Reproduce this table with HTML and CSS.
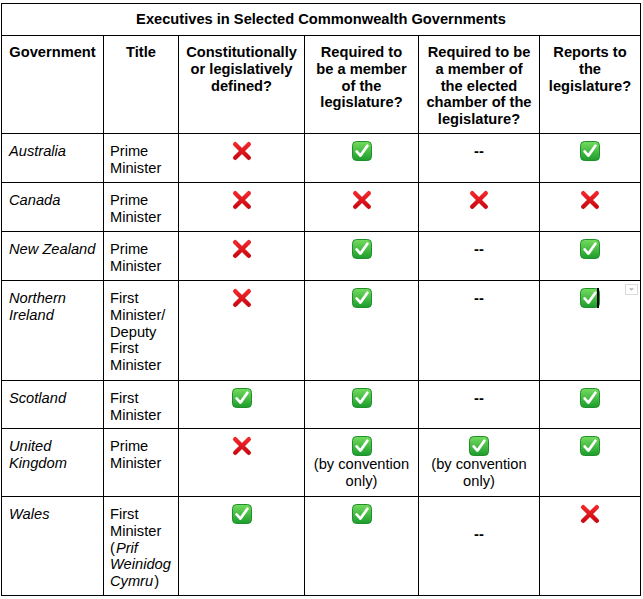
FILE: index.html
```html
<!DOCTYPE html>
<html>
<head>
<meta charset="utf-8">
<link rel="stylesheet" href="styles.css">
</head>
<body>
<svg class="defs" width="0" height="0" aria-hidden="true">
  <defs>
    <linearGradient id="gg" x1="0" y1="0" x2="0" y2="1">
      <stop offset="0" stop-color="#74dc5e"/>
      <stop offset="1" stop-color="#1c9c2c"/>
    </linearGradient>
    <linearGradient id="rg" x1="0" y1="0" x2="0" y2="1">
      <stop offset="0" stop-color="#f0262a"/>
      <stop offset="1" stop-color="#cc0a12"/>
    </linearGradient>
    <symbol id="chk" viewBox="0 0 20 20">
      <rect x="0.5" y="0.5" width="19" height="19" rx="4" fill="url(#gg)" stroke="#1f8f2b" stroke-width="1"/>
      <path d="M4.6 10.4 L8.4 14.6 L15.4 4.8" fill="none" stroke="#fff" stroke-width="2.7" stroke-linecap="round" stroke-linejoin="round"/>
    </symbol>
    <symbol id="crs" viewBox="0 0 20 20">
      <path d="M3.2 3.2 L16.8 16.8 M16.8 3.2 L3.2 16.8" fill="none" stroke="url(#rg)" stroke-width="4.4" stroke-linecap="round"/>
    </symbol>
  </defs>
</svg>
<table class="exec">
  <colgroup>
    <col class="w1"><col class="w2"><col class="w3"><col class="w4"><col class="w5"><col class="w6">
  </colgroup>
  <tr class="r-title"><th colspan="6">Executives in Selected Commonwealth Governments</th></tr>
  <tr class="r-head">
    <th>Government</th>
    <th>Title</th>
    <th>Constitutionally or legislatively defined?</th>
    <th>Required to be a member of the legislature?</th>
    <th>Required to be a member of the elected chamber of the legislature?</th>
    <th>Reports to the legislature?</th>
  </tr>
  <tr class="r-49">
    <td class="gov">Australia</td>
    <td class="ttl">Prime Minister</td>
    <td class="mk"><svg class="ic"><use href="#crs"/></svg></td>
    <td class="mk"><svg class="ic"><use href="#chk"/></svg></td>
    <td class="mk"><span class="dash">--</span></td>
    <td class="mk"><svg class="ic"><use href="#chk"/></svg></td>
  </tr>
  <tr class="r-49">
    <td class="gov">Canada</td>
    <td class="ttl">Prime Minister</td>
    <td class="mk"><svg class="ic"><use href="#crs"/></svg></td>
    <td class="mk"><svg class="ic"><use href="#crs"/></svg></td>
    <td class="mk"><svg class="ic"><use href="#crs"/></svg></td>
    <td class="mk"><svg class="ic"><use href="#crs"/></svg></td>
  </tr>
  <tr class="r-49">
    <td class="gov">New Zealand</td>
    <td class="ttl">Prime Minister</td>
    <td class="mk"><svg class="ic"><use href="#crs"/></svg></td>
    <td class="mk"><svg class="ic"><use href="#chk"/></svg></td>
    <td class="mk"><span class="dash">--</span></td>
    <td class="mk"><svg class="ic"><use href="#chk"/></svg></td>
  </tr>
  <tr class="r-100">
    <td class="gov">Northern Ireland</td>
    <td class="ttl">First Minister/ Deputy First Minister</td>
    <td class="mk"><svg class="ic"><use href="#crs"/></svg></td>
    <td class="mk"><svg class="ic"><use href="#chk"/></svg></td>
    <td class="mk"><span class="dash">--</span></td>
    <td class="mk sel">
      <span class="icwrap"><svg class="ic"><use href="#chk"/></svg><span class="cursor"></span></span>
      <span class="dropdown"><svg viewBox="0 0 13 11" width="13" height="11"><path d="M3.5 4 L9.5 4 L6.5 7 Z" fill="#b5b5b5"/></svg></span>
    </td>
  </tr>
  <tr class="r-48">
    <td class="gov">Scotland</td>
    <td class="ttl">First Minister</td>
    <td class="mk"><svg class="ic"><use href="#chk"/></svg></td>
    <td class="mk"><svg class="ic"><use href="#chk"/></svg></td>
    <td class="mk"><span class="dash">--</span></td>
    <td class="mk"><svg class="ic"><use href="#chk"/></svg></td>
  </tr>
  <tr class="r-68">
    <td class="gov">United Kingdom</td>
    <td class="ttl">Prime Minister</td>
    <td class="mk"><svg class="ic"><use href="#crs"/></svg></td>
    <td class="mk"><svg class="ic"><use href="#chk"/></svg><span class="note">(by convention only)</span></td>
    <td class="mk"><svg class="ic"><use href="#chk"/></svg><span class="note">(by convention only)</span></td>
    <td class="mk"><svg class="ic"><use href="#chk"/></svg></td>
  </tr>
  <tr class="r-99">
    <td class="gov">Wales</td>
    <td class="ttl"><span class="ln">First</span> <span class="ln">Minister</span> <span class="ln">(<i class="cy">Prif</i></span> <span class="ln"><i>Weinidog</i></span> <span class="ln"><i class="cy2">Cymru</i>)</span></td>
    <td class="mk"><svg class="ic"><use href="#chk"/></svg></td>
    <td class="mk"><svg class="ic"><use href="#chk"/></svg></td>
    <td class="mk"><span class="dash low">--</span></td>
    <td class="mk"><svg class="ic"><use href="#crs"/></svg></td>
  </tr>
</table>
</body>
</html>
```

FILE: styles.css
```css
html, body {
  margin: 0;
  padding: 0;
  background: #fff;
}
body {
  font-family: "Liberation Sans", Arial, sans-serif;
  font-size: 14.67px;
  line-height: 16.8px;
  color: #000;
}
.defs {
  position: absolute;
  width: 0;
  height: 0;
  overflow: hidden;
}
.exec {
  border-collapse: collapse;
  table-layout: fixed;
  width: 639px;
  margin: 3px 0 0 1px;
}
.w1 { width: 102px; }
.w2 { width: 75px; }
.w3 { width: 126px; }
.w4 { width: 114px; }
.w5 { width: 121px; }
.w6 { width: 101px; }

.exec th,
.exec td {
  border: 1px solid #000;
  padding: 9px 6px 0 6px;
  vertical-align: top;
}
.exec th {
  font-weight: bold;
  text-align: center;
  padding-top: 8px;
}
.r-title { height: 32px; }
.r-title th {
  padding: 0 6px;
  vertical-align: middle;
}
.r-head { height: 98px; }
.r-49 { height: 49px; }
.r-48 { height: 48px; }
.r-68 { height: 68px; }
.r-99 { height: 99px; }
.r-100 { height: 100px; }

.gov {
  font-style: italic;
  text-align: left;
  padding-left: 7px !important;
}
.ttl {
  text-align: left;
}
.ln {
  white-space: nowrap;
}
.cy {
  padding-left: 1px;
}
.cy2 {
  padding-right: 1px;
}
.mk {
  text-align: center;
}
.ic {
  display: block;
  width: 20px;
  height: 20px;
  margin: -2px auto 0;
}
.note {
  display: block;
}
.dash {
  display: block;
  font-weight: bold;
  padding-top: 0;
}
.dash.low {
  padding-top: 20px;
}
.sel {
  position: relative;
}
.icwrap {
  position: relative;
  display: block;
  width: 20px;
  height: 20px;
  margin: -2px auto 0;
}
.icwrap .ic {
  margin: 0;
}
.cursor {
  position: absolute;
  left: 17px;
  top: 0;
  width: 2px;
  height: 20px;
  background: #000;
}
.dropdown {
  position: absolute;
  top: 3px;
  right: 2px;
  width: 13px;
  height: 11px;
  border: 1px solid #dadada;
  background: #fff;
  box-sizing: border-box;
  line-height: 0;
}
.dropdown svg {
  display: block;
  width: 11px;
  height: 9px;
}
```
